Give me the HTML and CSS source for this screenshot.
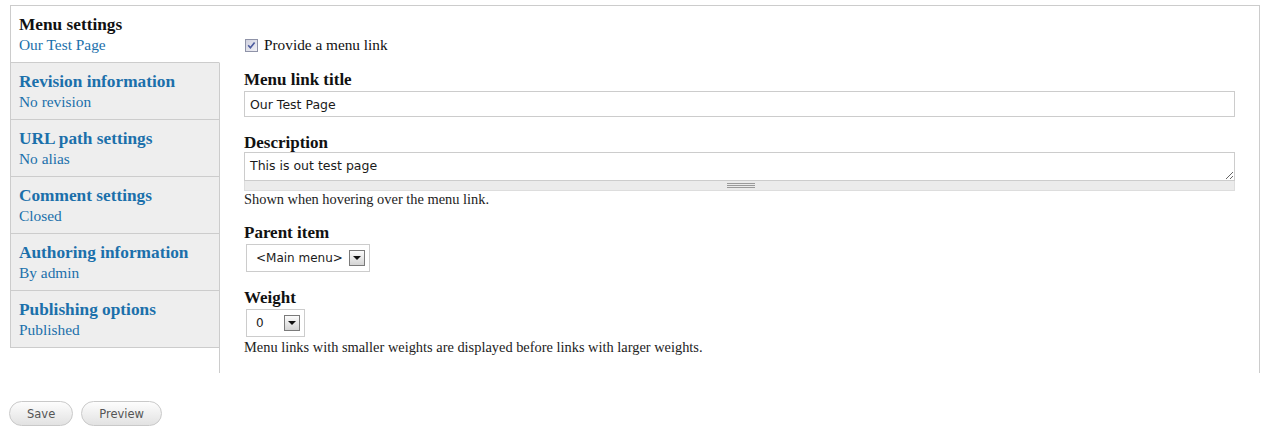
FILE: index.html
```html
<!DOCTYPE html>
<html lang="en">
<head>
<meta charset="utf-8">
<title>Menu settings</title>
<link rel="stylesheet" href="styles.css">
</head>
<body>
<div class="vtabs">
  <div class="vtabs-col">
    <ul class="vtabs-list">
      <li class="vtab active"><strong class="vtab-title">Menu settings</strong><span class="vtab-summary">Our Test Page</span></li>
      <li class="vtab"><strong class="vtab-title">Revision information</strong><span class="vtab-summary">No revision</span></li>
      <li class="vtab"><strong class="vtab-title">URL path settings</strong><span class="vtab-summary">No alias</span></li>
      <li class="vtab"><strong class="vtab-title">Comment settings</strong><span class="vtab-summary">Closed</span></li>
      <li class="vtab"><strong class="vtab-title">Authoring information</strong><span class="vtab-summary">By admin</span></li>
      <li class="vtab"><strong class="vtab-title">Publishing options</strong><span class="vtab-summary">Published</span></li>
    </ul>
    <div class="vtabs-fill"></div>
  </div>
  <div class="vtabs-pane">
    <div class="check-row">
      <svg class="checkbox" width="13" height="13" viewBox="0 0 13 13">
        <defs>
          <linearGradient id="cbg" x1="0" y1="0" x2="1" y2="1">
            <stop offset="0" stop-color="#cfd0de"/>
            <stop offset="1" stop-color="#f2f2f6"/>
          </linearGradient>
        </defs>
        <rect x="0.5" y="0.5" width="12" height="12" fill="url(#cbg)" stroke="#8f93a8"/>
        <path d="M3.2 6.2 L5.4 8.8 L9.6 3.4" fill="none" stroke="#4b5a9e" stroke-width="1.6"/>
      </svg>
      <span class="check-label">Provide a menu link</span>
    </div>

    <div class="form-item form-item-a">
      <label class="label">Menu link title</label>
      <input class="text-input" type="text" value="Our Test Page">
    </div>

    <div class="form-item form-item-d">
      <label class="label label-tight">Description</label>
      <textarea class="textarea">This is out test page</textarea>
      <div class="grippie"></div>
      <div class="help help-tight">Shown when hovering over the menu link.</div>
    </div>

    <div class="form-item form-item-b">
      <label class="label">Parent item</label>
      <div class="select select-main"><span class="select-value">&lt;Main menu&gt;</span><span class="select-arrow"></span></div>
    </div>

    <div class="form-item form-item-c">
      <label class="label">Weight</label>
      <div class="select select-weight"><span class="select-value">0</span><span class="select-arrow"></span></div>
      <div class="help help-after">Menu links with smaller weights are displayed before links with larger weights.</div>
    </div>
  </div>
</div>
<div class="actions">
  <button class="btn">Save</button>
  <button class="btn">Preview</button>
</div>
</body>
</html>
```

FILE: styles.css
```css
html, body {
  margin: 0;
  padding: 0;
  background: #fff;
}

body {
  font-family: "Liberation Serif", "Times New Roman", serif;
  color: #111;
}

.vtabs {
  display: flex;
  margin: 5px 19px 0 10px;
  border-top: 1px solid #ccc;
  border-right: 1px solid #ccc;
}

.vtabs-col {
  width: 210px;
  flex-shrink: 0;
  display: flex;
  flex-direction: column;
}

.vtabs-list {
  margin: 0;
  padding: 0;
  list-style: none;
  border-left: 1px solid #ccc;
}

.vtab {
  box-sizing: border-box;
  height: 57px;
  padding: 9px 8px 0;
  background: #eeeeee;
  border-bottom: 1px solid #ccc;
  border-right: 1px solid #ccc;
}

.vtab.active {
  background: #fff;
  border-right-color: #fff;
}

.vtab-title {
  display: block;
  font-size: 17.3px;
  line-height: 20px;
  font-weight: bold;
  color: #1b70ab;
  white-space: nowrap;
}

.vtab.active .vtab-title {
  color: #111;
}

.vtab-summary {
  display: block;
  font-size: 15.4px;
  line-height: 20px;
  color: #1b70ab;
  white-space: nowrap;
}

.vtabs-fill {
  flex: 1;
  border-right: 1px solid #ccc;
}

.vtabs-pane {
  flex: 1;
  padding: 29px 24px 18px;
  min-width: 0;
}

.check-row {
  display: flex;
  align-items: center;
  height: 20px;
}

.checkbox {
  margin-left: 1px;
  margin-right: 6px;
  flex-shrink: 0;
}

.check-label {
  font-size: 15.3px;
  line-height: 20px;
}

.form-item-a {
  margin-top: 15px;
}

.form-item-d {
  margin-top: 16px;
}

.form-item-b {
  margin-top: 16px;
}

.form-item-c {
  margin-top: 16px;
}

.label {
  display: block;
  font-size: 17px;
  line-height: 20px;
  font-weight: bold;
  margin-bottom: 1px;
  color: #111;
}

.label-tight {
  margin-bottom: -1px;
}

.text-input {
  display: block;
  box-sizing: border-box;
  width: 100%;
  height: 26px;
  margin: 0;
  padding: 0 5px;
  border: 1px solid #ccc;
  font-family: "DejaVu Sans", Verdana, sans-serif;
  font-size: 12.5px;
  color: #1a1a1a;
  background: #fff;
  outline: none;
}

.textarea {
  display: block;
  box-sizing: border-box;
  width: 100%;
  height: 29px;
  margin: 0;
  padding: 5px 5px 0;
  border: 1px solid #ccc;
  font-family: "DejaVu Sans", Verdana, sans-serif;
  font-size: 12.5px;
  line-height: 16px;
  color: #1a1a1a;
  resize: vertical;
  overflow: hidden;
  background: #fff;
}

.grippie {
  position: relative;
  height: 9px;
  background: #ebebeb;
  border: 1px solid #ddd;
  border-top: 0;
}

.grippie::after {
  content: "";
  position: absolute;
  left: 50%;
  top: 2px;
  width: 28px;
  height: 5px;
  margin-left: -13px;
  background: repeating-linear-gradient(to bottom, #9a9a9a 0, #9a9a9a 1px, transparent 1px, transparent 2px);
}

.help {
  font-size: 14.4px;
  line-height: 15px;
  color: #222;
}

.help-tight {
  margin-top: 1px;
}

.help-after {
  margin-top: 3px;
}

.select {
  box-sizing: border-box;
  display: flex;
  align-items: center;
  height: 28px;
  margin-left: 2px;
  padding: 0 4px 0 9px;
  border: 1px solid #ccc;
  background: #fff;
  font-family: "DejaVu Sans", Verdana, sans-serif;
  font-size: 12px;
  color: #1a1a1a;
}

.select-main {
  width: 124px;
}

.select-weight {
  width: 59px;
}

.select-arrow {
  position: relative;
  box-sizing: border-box;
  margin-left: auto;
  width: 16px;
  height: 16px;
  border: 1px solid #7a7a7a;
  background: linear-gradient(to bottom, #fbfbfb, #d4d4d4);
}

.select-arrow::after {
  content: "";
  position: absolute;
  left: 3px;
  top: 5px;
  border-left: 4px solid transparent;
  border-right: 4px solid transparent;
  border-top: 4px solid #111;
}

.actions {
  display: flex;
  gap: 8px;
  padding-left: 9px;
  margin-top: 28px;
}

.btn {
  box-sizing: border-box;
  height: 25px;
  padding: 0 17px;
  border: 1px solid #c9c9c9;
  border-radius: 13px;
  background: linear-gradient(to bottom, #fdfdfd, #e2e2e2);
  font-family: "DejaVu Sans", Verdana, sans-serif;
  font-size: 11.5px;
  color: #555;
  cursor: pointer;
}
```
